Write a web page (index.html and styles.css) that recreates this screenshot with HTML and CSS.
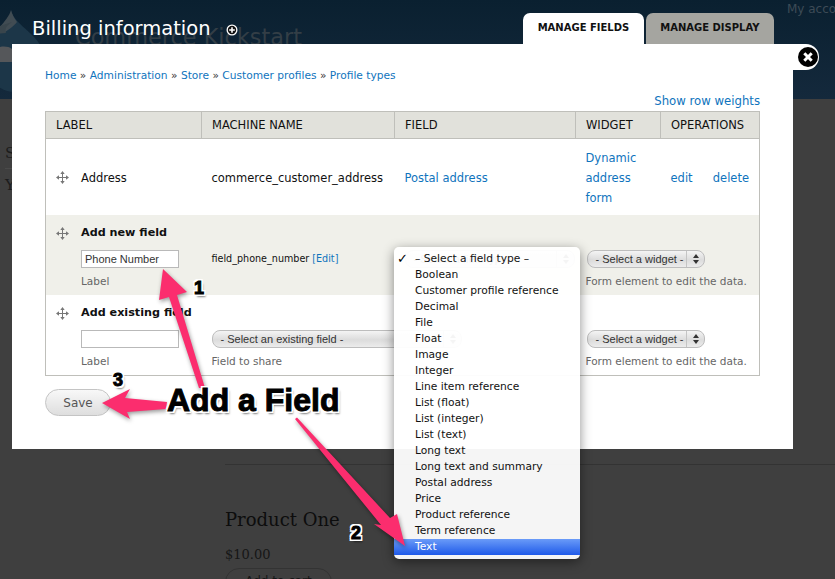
FILE: index.html
```html
<!DOCTYPE html>
<html lang="en">
<head>
<meta charset="utf-8">
<title>Billing information</title>
<link rel="stylesheet" href="styles.css">
</head>
<body>
<div class="page">
  <header class="masthead">
    <svg class="drop" viewBox="0 0 50 99" width="50" height="99"><path d="M11 10C11 24-14 34-14 60C-14 84 4 92 14 92C30 92 44 76 44 58C44 36 14 26 11 10Z" fill="#1c3648"/><path d="M11 10C9 18 0 26-4 32L4 33C8 30 14 26 17 22C14 18 12 14 11 10Z" fill="#414c53"/><path d="M-4 34L6 33C4 28 8 25 12 22L0 26Z" fill="#39454c"/><path d="M-4 48C2 46 8 46 12 49V62L-4 62Z" fill="#55575a"/></svg>
    <div class="sitename">Commerce Kickstart</div>
    <div class="account">My account</div>
    <div class="title-row">
      <h1 class="page-title">Billing information</h1>
      <svg class="add-icon" viewBox="0 0 12 12" width="12" height="12"><circle cx="6" cy="6" r="5.5" fill="#fff"/><circle cx="6" cy="6" r="4.2" fill="#111"/><path d="M6 3.2v5.6M3.2 6h5.6" stroke="#fff" stroke-width="1.6"/></svg>
    </div>
    <nav class="tabs">
      <a class="tab tab-active">MANAGE FIELDS</a>
      <a class="tab">MANAGE DISPLAY</a>
    </nav>
  </header>
  <main class="backdrop">
    <aside class="side">
      <div class="side-a">S</div>
      <div class="side-b">Y</div>
    </aside>
    <section class="product">
      <h2 class="product-name">Product One</h2>
      <div class="product-price">$10.00</div>
      <div class="cart">Add to cart</div>
    </section>
  </main>

  <div class="close-tab"><svg viewBox="0 0 20 20" width="20" height="20"><circle cx="10" cy="10" r="10" fill="#000"/><path d="M6.3 6.3l7.4 7.4M13.7 6.3l-7.4 7.4" stroke="#fff" stroke-width="3"/></svg></div>

  <div class="modal">
    <div class="crumbs"><a>Home</a> » <a>Administration</a> » <a>Store</a> » <a>Customer profiles</a> » <a>Profile types</a></div>
    <div class="weights"><a>Show row weights</a></div>
    <table class="fields">
      <colgroup><col class="c1"><col class="c2"><col class="c3"><col class="c4"><col class="c5"></colgroup>
      <thead>
        <tr><th>LABEL</th><th>MACHINE NAME</th><th>FIELD</th><th>WIDGET</th><th>OPERATIONS</th></tr>
      </thead>
      <tbody>
        <tr class="row-address">
          <td><div class="label-cell mid"><svg class="handle" viewBox="0 0 13 13" width="13" height="13"><use href="#move"/></svg><span>Address</span></div></td>
          <td>commerce_customer_address</td>
          <td><a>Postal address</a></td>
          <td><a>Dynamic address form</a></td>
          <td><div class="ops"><a>edit</a><a>delete</a></div></td>
        </tr>
        <tr class="row-new">
          <td class="top"><div class="label-cell"><svg class="handle handle-top" viewBox="0 0 13 13" width="13" height="13"><use href="#move"/></svg><div><div class="add-title">Add new field</div><div class="input">Phone Number</div><div class="note">Label</div></div></div></td>
          <td class="top ctl"><div class="machine">field_phone_number <a>[Edit]</a></div></td>
          <td class="top ctl"><div class="aqua aqua-type"><span>- Select a field type -</span><i></i></div></td>
          <td class="top ctl" colspan="2"><div class="aqua aqua-widget"><span>- Select a widget -</span><i></i></div><div class="note">Form element to edit the data.</div></td>
        </tr>
        <tr class="row-existing">
          <td class="top"><div class="label-cell"><svg class="handle handle-top" viewBox="0 0 13 13" width="13" height="13"><use href="#move"/></svg><div><div class="add-title">Add existing field</div><div class="input"></div><div class="note">Label</div></div></div></td>
          <td class="top ctl" colspan="2"><div class="aqua aqua-existing"><span>- Select an existing field -</span><i></i></div><div class="note">Field to share</div></td>
          <td class="top ctl" colspan="2"><div class="aqua aqua-widget"><span>- Select a widget -</span><i></i></div><div class="note">Form element to edit the data.</div></td>
        </tr>
      </tbody>
    </table>
    <div class="save">Save</div>
  </div>

  <ul class="menu">
    <li class="checked">– Select a field type –</li>
    <li>Boolean</li>
    <li>Customer profile reference</li>
    <li>Decimal</li>
    <li>File</li>
    <li>Float</li>
    <li>Image</li>
    <li>Integer</li>
    <li>Line item reference</li>
    <li>List (float)</li>
    <li>List (integer)</li>
    <li>List (text)</li>
    <li>Long text</li>
    <li>Long text and summary</li>
    <li>Postal address</li>
    <li>Price</li>
    <li>Product reference</li>
    <li>Term reference</li>
    <li class="picked">Text</li>
  </ul>

  <svg class="arrows" viewBox="0 0 835 579" width="835" height="579">
    <defs>
      <g id="move"><path d="M6.5 2v9M2 6.5h9" fill="none" stroke="#777" stroke-width="1"/><path d="M4.3 3l2.2-3 2.2 3zM4.3 10l2.2 3 2.2-3zM3 4.3l-3 2.2 3 2.2zM10 4.3l3 2.2-3 2.2z" fill="#777"/></g>
    </defs>
    <g class="arrow-shapes">
      <path d="M163 269L187 292L177 295L205 388L199 388L169 297L159 300Z"/>
      <path d="M297 417.5L390 518L397 514L405 546L374 524L381 525L295 419Z"/>
      <path d="M102 403L130 389L125 398L167 402L166 409L127 412L130 419Z"/>
    </g>
  </svg>

  <div class="callout">Add a Field</div>
  <div class="num num-1">1</div>
  <div class="num num-2">2</div>
  <div class="num num-3">3</div>
</div>
</body>
</html>
```

FILE: styles.css
```css
* { box-sizing: border-box; }
html, body { margin: 0; height: 579px; overflow: hidden; }
body { font-family: "DejaVu Sans", sans-serif; font-size: 11px; color: #111; background: #3f3f3f; }
a { color: #0f74bd; }
.page { position: relative; width: 835px; height: 579px; overflow: hidden; background: #3f3f3f; }

.masthead { position: relative; height: 99px; display: flex; justify-content: space-between; align-items: flex-start; padding: 13px 61px 0 32px; background: linear-gradient(#0a2030, #14293c); overflow: hidden; }
.drop { position: absolute; left: 0; top: 0; }
.sitename { position: absolute; left: 75px; top: 24px; font-size: 22.4px; color: #333e46; white-space: nowrap; }
.account { position: absolute; left: 787px; top: 2px; font-size: 12px; color: #3d4b56; white-space: nowrap; }
.title-row { position: relative; display: flex; align-items: center; gap: 15px; padding-top: 4px; }
.page-title { margin: 0; font-size: 19.5px; line-height: 24px; font-weight: 400; color: #fff; }
.add-icon { margin-top: 2px; }
.tabs { position: relative; display: flex; gap: 2px; }
.tab { height: 31px; padding: 0 14.5px; border-radius: 7px 7px 0 0; line-height: 30px; font-size: 10px; font-weight: 700; color: #111; background: #a5a5a0; white-space: nowrap; }
.tab-active { background: #fff; }

.backdrop { display: flex; color: #161616; }
.side { width: 225px; padding: 44px 0 0 5px; font-family: "DejaVu Serif", "Liberation Serif", serif; font-size: 15px; color: #1c1c1c; }
.side-a { line-height: 20px; padding-bottom: 5px; border-bottom: 1px solid #4a4a4a; }
.side-b { margin-top: 6px; line-height: 20px; }
.product { flex: 1; margin-top: 365px; padding-top: 43px; border-top: 1px solid #333; font-family: "DejaVu Serif", "Liberation Serif", serif; }
.product-name { margin: 0; font-size: 18px; line-height: 24px; font-weight: 400; color: #0d0d0d; }
.product-price { margin-top: 14px; font-size: 13px; line-height: 18px; }
.cart { width: 107px; margin-top: 4px; height: 30px; border: 1px solid #333; border-radius: 14px; text-align: center; font-size: 12px; line-height: 24px; font-family: "DejaVu Sans", sans-serif; }

.close-tab { position: absolute; left: 785px; top: 44px; width: 34px; height: 26px; padding: 3px 0 0 13px; background: #fff; border-radius: 0 13px 13px 0; }
.close-tab svg { display: block; }

.modal { position: absolute; left: 12px; top: 44px; width: 781px; height: 405px; padding: 24px 33px 0; background: #fff; }
.crumbs { font-size: 10.65px; line-height: 14px; color: #333; white-space: nowrap; padding-top: 1px; }
.weights { margin-top: 10px; font-size: 11.7px; line-height: 16px; text-align: right; width: 715px; }

.fields { width: 714px; table-layout: fixed; border-collapse: collapse; border: 1px solid #bfbfba; margin-top: 2px; font-size: 11.5px; }
.c1 { width: 156px; } .c2 { width: 193px; } .c3 { width: 181px; } .c4 { width: 85px; } .c5 { width: 99px; }
.fields th { height: 27px; padding: 0 10px; text-align: left; font-weight: 400; font-size: 11.5px; color: #111; background: #e1e1db; border: 1px solid #bfbfba; }
.fields td { padding: 0 10px; line-height: 20px; vertical-align: middle; }
.row-address { height: 76px; }
.row-address td { padding-top: 2px; }
.row-new { height: 80px; background: #f0f0ea; }
.row-existing { height: 81px; }
.fields td.top { vertical-align: top; }
.fields td.ctl { padding-top: 35px; }

.label-cell { display: flex; align-items: flex-start; gap: 12px; }
.label-cell.mid { align-items: center; }
.handle { flex: none; }
.handle-top { margin-top: 12px; }
.add-title { padding-top: 10px; margin-bottom: 9px; line-height: 16px; font-size: 11.2px; font-weight: 700; color: #111; white-space: nowrap; }
.input { width: 98px; height: 18px; padding-left: 3px; border: 1px solid #b9b9b9; background: #fff; font-family: "Liberation Sans", sans-serif; font-size: 11px; line-height: 16px; color: #333; }
.note { margin-top: 5px; line-height: 16px; font-size: 10.5px; color: #666; white-space: nowrap; }
.machine { height: 18px; line-height: 18px; font-size: 9.6px; white-space: nowrap; }
.ops { display: flex; justify-content: space-between; }

.aqua { position: relative; display: flex; align-items: center; height: 18px; padding-left: 8px; border: 1px solid #bdbdbd; border-radius: 8px; background: linear-gradient(#f4f4f4, #dcdcdc 55%, #ececec); font-family: "Liberation Sans", sans-serif; font-size: 11px; color: #333; white-space: nowrap; }
.aqua i { position: absolute; right: 0; top: 0; bottom: 0; width: 18px; border-left: 1px solid #c4c4c4; }
.aqua i::before { content: ""; position: absolute; left: 6px; top: 3px; border: 3px solid transparent; border-top: 0; border-bottom: 4px solid #333; }
.aqua i::after { content: ""; position: absolute; left: 6px; bottom: 3px; border: 3px solid transparent; border-bottom: 0; border-top: 4px solid #333; }
.aqua-type { width: 170px; }
.aqua-widget { width: 118px; margin-left: 1px; }
.aqua-existing { width: 250px; }

.save { width: 66px; height: 27px; margin-top: 13px; border: 1px solid #c4c4c4; border-radius: 14px; background: linear-gradient(#f8f8f8, #dedede); text-align: center; font-size: 12px; line-height: 26px; color: #555; }

.menu { position: absolute; left: 394px; top: 247px; width: 186px; height: 312px; margin: 0; padding: 4px 0; list-style: none; background: rgba(255,255,255,.95); border-radius: 5px; box-shadow: 0 3px 12px rgba(0,0,0,.45); font-size: 10.7px; color: #111; }
.menu li { position: relative; height: 16px; padding-left: 21px; line-height: 15px; white-space: nowrap; }
.checked::before { content: "✓"; position: absolute; left: 3px; top: 0; font-weight: 700; font-size: 13px; color: #000; }
.picked { color: #fff; background: linear-gradient(#6a9bf8, #1f5ae9); }

.arrows { position: absolute; left: 0; top: 0; pointer-events: none; }
.arrow-shapes { fill: #fb2d6e; filter: drop-shadow(1px 2px 2px rgba(0,0,0,.4)); }

.callout, .num { position: absolute; font-family: "Liberation Sans", sans-serif; font-weight: 700; color: #000; -webkit-text-stroke: 1px #000; text-shadow: 2px 0 0 #fff, -2px 0 0 #fff, 0 2px 0 #fff, 0 -2px 0 #fff, 2px 2px 0 #fff, -2px 2px 0 #fff, 2px -2px 0 #fff, -2px -2px 0 #fff, 2px 3px 2px rgba(0,0,0,.5); white-space: nowrap; }
.callout { left: 167px; top: 382px; font-size: 32px; line-height: 36px; }
.num { font-size: 18px; line-height: 20px; }
.num-1 { left: 194px; top: 278px; }
.num-2 { left: 351px; top: 523px; }
.num-3 { left: 113px; top: 370px; }
```
